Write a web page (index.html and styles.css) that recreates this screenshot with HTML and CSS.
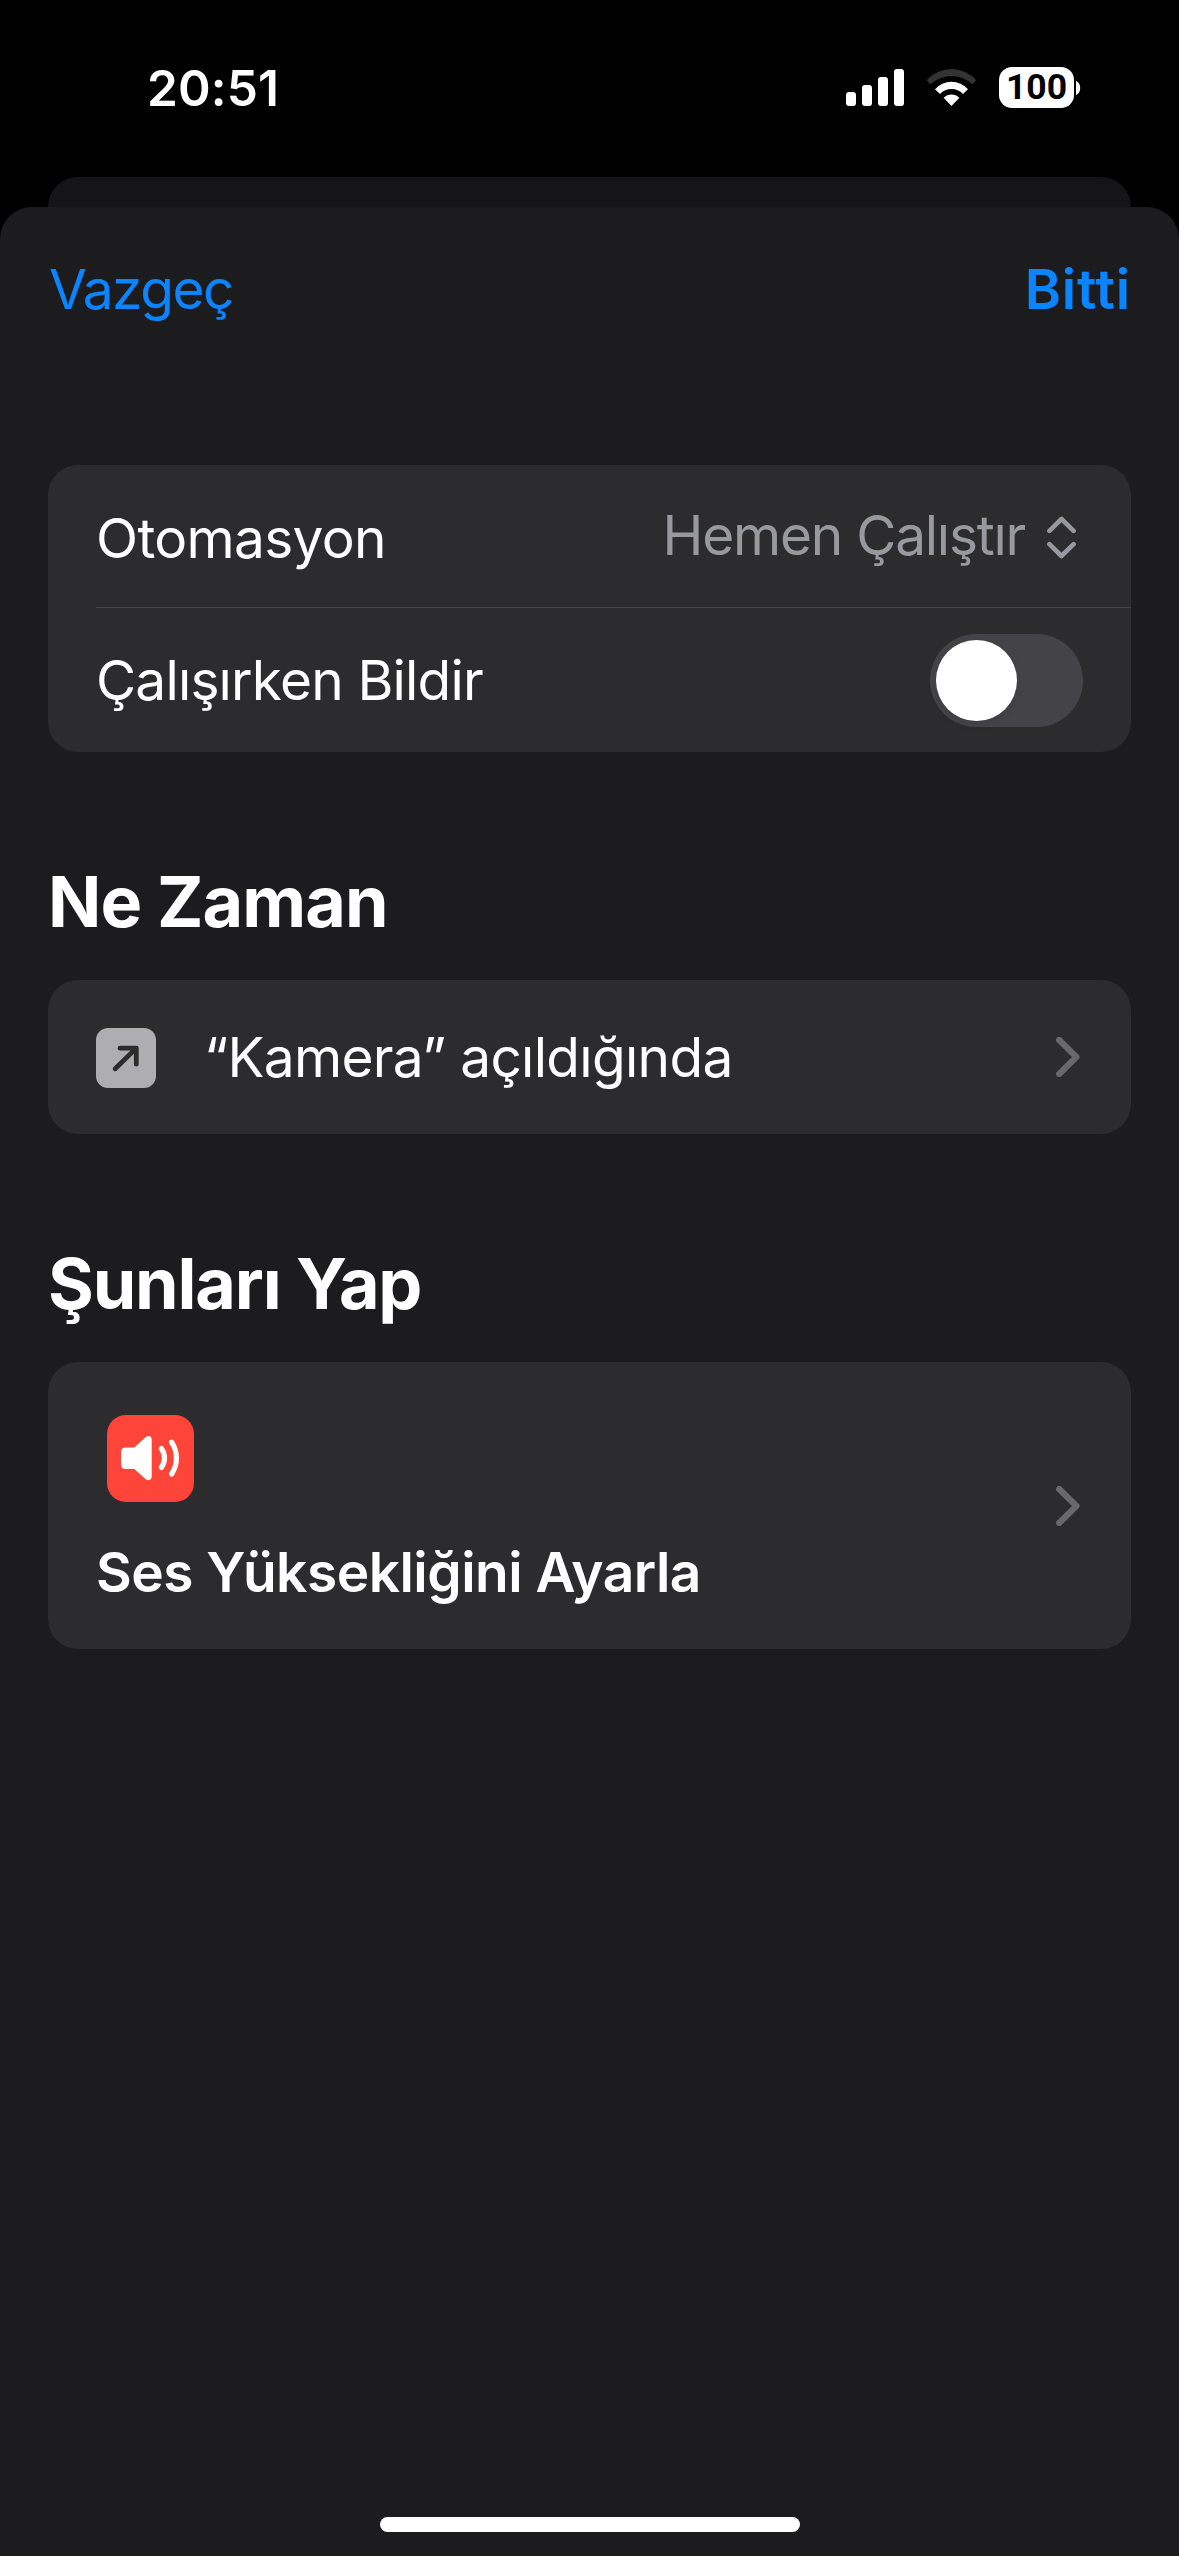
FILE: index.html
```html
<!DOCTYPE html>
<html lang="tr">
<head>
    <meta charset="UTF-8">
    <meta name="viewport" content="width=device-width, initial-scale=1.0">
    <title>Otomasyon</title>
    <link rel="stylesheet" href="styles.css">
</head>
<body>
    <header class="status-bar">
        <span class="time">20:51</span>
        <div class="status-icons">
            <svg width="58" height="37" viewBox="0 0 58 37" fill="#fff">
                <rect x="0" y="23" width="10" height="14" rx="3"/>
                <rect x="16" y="16" width="10" height="21" rx="3"/>
                <rect x="32" y="8" width="10" height="29" rx="3"/>
                <rect x="48" y="0" width="10" height="37" rx="3"/>
            </svg>
            <svg width="51" height="37" viewBox="0 0 51 37" fill="#fff">
                <path fill="#333" d="M.7 11.3A33 33 0 0 1 50.3 11.3L46.4 15.3A30.7 30.7 0 0 0 4.6 15.3Z"/>
                <path d="M9 20.3A21.8 21.8 0 0 1 42 20.3L37 25A15.7 15.7 0 0 0 14 25Z"/>
                <path d="M17.6 28.8A11 11 0 0 1 33.4 28.8L25.5 37Z"/>
            </svg>
            <div class="battery">
                <span class="battery-level">100</span>
                <svg width="5" height="14" viewBox="0 0 5 14" fill="#fff">
                    <path d="M0 0C2.6 1 4.2 3.6 4.2 7S2.6 13 0 14Z"/>
                </svg>
            </div>
        </div>
    </header>

    <div class="back-sheet"></div>

    <main class="sheet">
        <nav class="nav">
            <a class="cancel">Vazgeç</a>
            <a class="done">Bitti</a>
        </nav>

        <section class="card options">
            <div class="row picker-row">
                <span class="label-automation">Otomasyon</span>
                <div class="picker">
                    <span class="picker-value">Hemen Çalıştır</span>
                    <svg width="29" height="43" viewBox="0 0 29 43" fill="none" stroke="#98989f" stroke-width="4.6" stroke-linecap="round" stroke-linejoin="round">
                        <path d="M2.4 14.9L14.5 3L26.6 14.9"/>
                        <path d="M2.4 28.1L14.5 40L26.6 28.1"/>
                    </svg>
                </div>
            </div>
            <div class="divider"></div>
            <div class="row toggle-row">
                <span class="label-notify">Çalışırken Bildir</span>
                <div class="toggle"><div class="knob"></div></div>
            </div>
        </section>

        <h2 class="title-when">Ne Zaman</h2>
        <section class="card trigger">
            <svg class="open-icon" width="60" height="60" viewBox="0 0 60 60" fill="none">
                <rect width="60" height="60" rx="12" fill="#aeaeb2"/>
                <path d="M19.2 40.8L40 20.4M24 20.2H40.3V36.2" stroke="#2c2c2e" stroke-width="4.8" stroke-linecap="round" stroke-linejoin="round"/>
            </svg>
            <span class="trigger-text">“Kamera” açıldığında</span>
            <svg class="chevron" width="24" height="40" viewBox="0 0 24 40">
                <path d="M3.2 3L20.4 20L3.2 37"/>
            </svg>
        </section>

        <h2 class="title-do">Şunları Yap</h2>
        <section class="card action">
            <div class="action-body">
                <svg class="sound-icon" width="87" height="87" viewBox="0 0 87 87" fill="none">
                    <rect width="87" height="87" rx="19" fill="#ff453a"/>
                    <path fill="#fff" d="M18.8 32.5H27.3L38.5 22.2C41 20 44.7 20.8 44.7 24.4V61.6C44.7 65.2 41 66.2 38.5 63.9L27.3 54H18.8C15.6 54 14 52.4 14 49.4V37.2C14 34.1 15.6 32.5 18.8 32.5Z"/>
                    <path stroke="#fff" stroke-width="5.2" stroke-linecap="round" d="M54.4 33.6A16 16 0 0 1 54.4 52.4M64.6 27.2A28.7 28.7 0 0 1 64.6 59"/>
                </svg>
                <span class="action-text">Ses Yüksekliğini Ayarla</span>
            </div>
            <svg class="chevron" width="24" height="40" viewBox="0 0 24 40">
                <path d="M3.2 3L20.4 20L3.2 37"/>
            </svg>
        </section>

        <div class="home-indicator"></div>
    </main>
</body>
</html>
```
FILE: styles.css
```css
* {
    margin: 0;
    padding: 0;
    box-sizing: border-box;
}

body {
    display: flex;
    flex-direction: column;
    height: 2556px;
    background-color: #000;
    color: #fff;
    font-family: Inter, "Noto Sans", sans-serif;
    font-size: 55px;
    line-height: 70px;
    white-space: nowrap;
    overflow: hidden;
}

svg {
    display: block;
    flex-shrink: 0;
}

/* Status bar */
.status-bar {
    display: flex;
    justify-content: space-between;
    align-items: center;
    height: 177px;
    padding: 0 98px 2px 147px;
}

.time {
    font-size: 49.5px;
    font-weight: 600;
    letter-spacing: 0.15px;
}

.status-icons {
    display: flex;
    align-items: center;
    gap: 22px;
}

.battery {
    display: flex;
    align-items: center;
    gap: 2px;
}

.battery-level {
    width: 75px;
    height: 41px;
    border-radius: 13px;
    background-color: #fff;
    color: #000;
    font-family: Roboto, sans-serif;
    font-size: 35.5px;
    font-weight: 700;
    line-height: 41px;
    text-align: center;
}

/* Sheets */
.back-sheet {
    height: 30px;
    margin: 0 48px;
    border-radius: 30px 30px 0 0;
    background-color: #151517;
}

.sheet {
    display: flex;
    flex-direction: column;
    flex: 1;
    padding: 0 48px 24px;
    border-radius: 32px 32px 0 0;
    background-color: #1c1c1e;
}

.nav {
    display: flex;
    justify-content: space-between;
    align-items: center;
    height: 164px;
    margin-bottom: 94px;
    color: #0a84ff;
}

.cancel {
    margin-left: 1px;
    letter-spacing: -1.48px;
}

.done {
    font-weight: 600;
    letter-spacing: 0.81px;
}

.card {
    border-radius: 30px;
    background-color: #2c2c2e;
}

/* Run options */
.row {
    display: flex;
    justify-content: space-between;
    align-items: center;
    padding: 0 48px;
}

.picker-row {
    height: 142px;
    padding: 3px 55px 0 48px;
}

.toggle-row {
    height: 144px;
}

.divider {
    height: 1px;
    margin-left: 48px;
    background-color: #464649;
}

.label-automation {
    letter-spacing: -0.67px;
}

.label-notify {
    letter-spacing: -0.83px;
}

.picker {
    display: flex;
    align-items: center;
    gap: 22px;
    color: #98989f;
}

.picker-value {
    padding-bottom: 5px;
    letter-spacing: -1.25px;
}

.toggle {
    width: 153px;
    height: 93px;
    padding: 6px;
    border-radius: 47px;
    background-color: #444448;
}

.knob {
    width: 81px;
    height: 81px;
    border-radius: 50%;
    background-color: #fff;
    box-shadow: 0 3px 10px rgba(0, 0, 0, 0.08);
}

/* Sections */
h2 {
    margin: 110px 0 38px;
    font-size: 70px;
    font-weight: 700;
    line-height: 80px;
}

.title-when {
    letter-spacing: -0.9px;
}

.title-do {
    letter-spacing: -1.15px;
}

.trigger {
    display: flex;
    align-items: center;
    gap: 48px;
    height: 154px;
    padding: 0 51px 0 48px;
}

.open-icon {
    margin-top: 2px;
}

.trigger-text {
    flex: 1;
    letter-spacing: -0.7px;
}

.action {
    display: flex;
    justify-content: space-between;
    align-items: center;
    height: 287px;
    padding: 0 51px 0 48px;
}

.action-body {
    display: flex;
    flex-direction: column;
    gap: 35px;
    padding-top: 11px;
}

.sound-icon {
    margin-left: 11px;
}

.action-text {
    font-weight: 600;
    letter-spacing: -0.5px;
}

.chevron {
    fill: none;
    stroke: #68686d;
    stroke-width: 6.2px;
    stroke-linecap: round;
    stroke-linejoin: round;
}

.home-indicator {
    width: 420px;
    height: 15px;
    margin: auto auto 0;
    border-radius: 8px;
    background-color: #fff;
}
```
